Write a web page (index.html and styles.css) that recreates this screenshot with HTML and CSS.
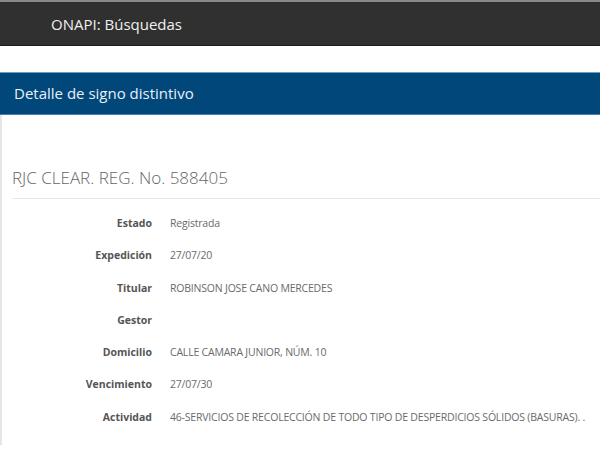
FILE: index.html
```html
<!DOCTYPE html>
<html lang="es">
<head>
  <meta charset="UTF-8" />
  <meta name="viewport" content="width=device-width, initial-scale=1.0"/>
  <title>ONAPI: Búsquedas</title>
  <link rel="stylesheet" href="styles.css">
</head>
<body>
  <div class="navbar">
    <span class="brand">ONAPI: Búsquedas</span>
  </div>

  <div class="panel">
    <div class="panel-heading">Detalle de signo distintivo</div>
    <div class="panel-body">
      <h2 class="sign-title">RJC CLEAR. REG. No. 588405</h2>

      <dl class="details">
        <dt>Estado</dt>
        <dd>Registrada</dd>
        <dt>Expedición</dt>
        <dd>27/07/20</dd>
        <dt>Titular</dt>
        <dd>ROBINSON JOSE CANO MERCEDES</dd>
        <dt>Gestor</dt>
        <dd></dd>
        <dt>Domicilio</dt>
        <dd>CALLE CAMARA JUNIOR, NÚM. 10</dd>
        <dt>Vencimiento</dt>
        <dd>27/07/30</dd>
        <dt>Actividad</dt>
        <dd>46-SERVICIOS DE RECOLECCIÓN DE TODO TIPO DE DESPERDICIOS SÓLIDOS (BASURAS). .</dd>
      </dl>
    </div>
  </div>
</body>
</html>
```

FILE: styles.css
```css
body {
  font-family: "Open Sans", Arial, sans-serif;
  background: #fff;
  margin: 0;
  color: #555;
}

.navbar {
  height: 43px;
  background: #303030;
  border-top: 2px solid #8a8a8a;
  border-bottom: 1px solid #1c1c1c;
  display: flex;
  align-items: center;
  padding-left: 51px;
}

.brand {
  color: #f0f0f0;
  font-size: 15px;
}

.panel {
  margin-top: 26px;
  border-left: 2px solid #e6e6e6;
}

.panel-heading {
  background: #02477a;
  border-top: 1px solid #6c9cc0;
  border-bottom: 1px solid #4c7fa6;
  color: #e8f0f8;
  font-size: 15px;
  height: 41px;
  line-height: 41px;
  padding-left: 14px;
  margin-left: -2px;
}

.panel-body {
  padding: 51px 0 20px 10px;
}

.sign-title {
  margin: 0;
  font-size: 17px;
  font-weight: 300;
  color: #666;
  padding-bottom: 9px;
  border-bottom: 1px solid #e8e8e8;
}

.details {
  display: grid;
  grid-template-columns: 140px 1fr;
  column-gap: 18px;
  row-gap: 17.3px;
  margin: 17px 0 0;
  font-size: 10.5px;
}

.details dt {
  text-align: right;
  font-weight: bold;
  color: #555;
  line-height: 15px;
}

.details dd {
  margin: 0;
  color: #6a6a6a;
  line-height: 15px;
  min-height: 15px;
  letter-spacing: -0.2px;
  white-space: nowrap;
}
```
